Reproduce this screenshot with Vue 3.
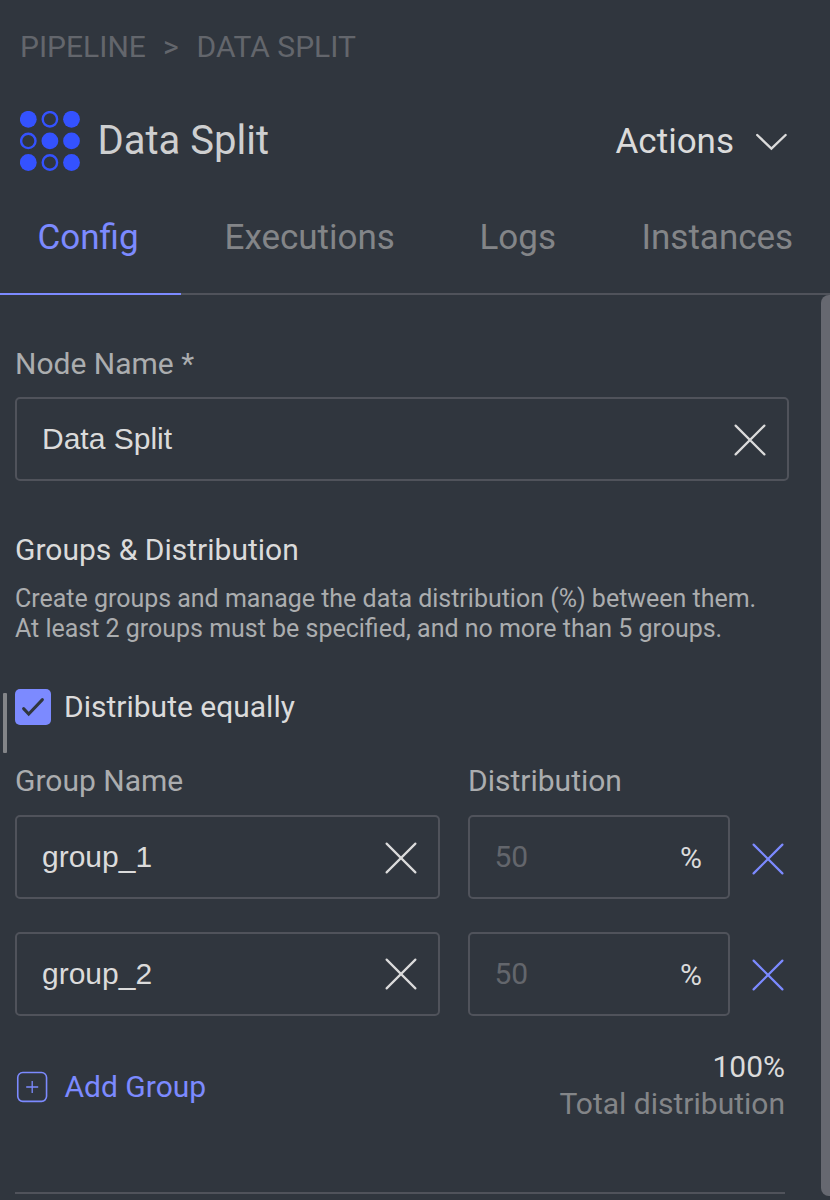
<script setup>
import { ref } from 'vue'

const tabs = ['Config', 'Executions', 'Logs', 'Instances']
const activeTab = ref('Config')
const nodeName = ref('Data Split')
const equal = ref(true)
const groups = ref([
  { name: 'group_1', share: 50 },
  { name: 'group_2', share: 50 },
])
const dots = [
  [8.3, 8.3, 1], [29.9, 8.3, 0], [51.5, 8.3, 1],
  [8.3, 29.9, 0], [29.9, 29.9, 1], [51.5, 29.9, 1],
  [8.3, 51.5, 1], [29.9, 51.5, 0], [51.5, 51.5, 1],
]
</script>

<template>
  <div class="panel">
    <nav class="crumbs">
      <span class="crumb-root">PIPELINE</span>
      <span class="crumb-sep">&gt;</span>
      <span class="crumb-leaf">DATA SPLIT</span>
    </nav>

    <header class="head">
      <svg class="logo" viewBox="0 0 60 60">
        <circle
          v-for="(d, i) in dots" :key="i" :cx="d[0]" :cy="d[1]" :r="d[2] ? 8.4 : 7.2"
          :class="d[2] ? 'dot' : 'ring'"
        />
      </svg>
      <h1 class="title">Data Split</h1>
      <button class="actions">
        <span>Actions</span>
        <svg class="chevron" viewBox="0 0 32 18"><path d="M1.2 2 L15.4 15.6 L29.6 2" /></svg>
      </button>
    </header>

    <div class="tabs">
      <button
        v-for="t in tabs" :key="t" class="tab" :class="[{ active: t === activeTab }, t.toLowerCase()]"
        @click="activeTab = t"
      ><span>{{ t }}</span></button>
    </div>

    <main class="content">
      <label class="label node-label">Node Name *</label>
      <div class="field node-field">
        <input v-model="nodeName" class="input">
        <svg class="x" viewBox="0 0 32 32"><path d="M1.6 1.6 L30.4 30.4 M30.4 1.6 L1.6 30.4" /></svg>
      </div>

      <h2 class="section">Groups &amp; Distribution</h2>
      <p class="desc">
        <span class="desc-a">Create groups and manage the data distribution (%) between them.</span><br>
        <span class="desc-b">At least 2 groups must be specified, and no more than 5 groups.</span>
      </p>

      <div class="check" @click="equal = !equal">
        <span class="box">
          <svg v-if="equal" viewBox="0 0 36 36"><path d="M8.6 19.6 L13.7 25 L27.4 10.6" /></svg>
        </span>
        <span class="check-text">Distribute equally</span>
      </div>

      <div class="grid">
        <span class="label name-label">Group Name</span>
        <span class="label dist-label">Distribution</span>
        <span></span>
        <template v-for="g in groups" :key="g.name">
          <div class="field name-field">
            <input v-model="g.name" class="input">
            <svg class="x" viewBox="0 0 32 32"><path d="M1.6 1.6 L30.4 30.4 M30.4 1.6 L1.6 30.4" /></svg>
          </div>
          <div class="field share">
            <span class="num">{{ g.share }}</span>
            <span class="pct">%</span>
          </div>
          <svg class="x remove" viewBox="0 0 32 32"><path d="M1.6 1.6 L30.4 30.4 M30.4 1.6 L1.6 30.4" /></svg>
        </template>
      </div>

      <footer class="foot">
        <button class="add">
          <svg viewBox="0 0 32 32">
            <rect x="1.75" y="1.55" width="28.8" height="28.8" rx="5" />
            <path d="M16.2 10 V22 M10.2 16 H22.2" />
          </svg>
          <span class="add-text">Add Group</span>
        </button>
        <div class="total">
          <div class="total-num">100%</div>
          <div class="total-text">Total distribution</div>
        </div>
      </footer>
      <hr class="rule">
    </main>
    <div class="scrollbar"></div>
    <div class="handle"></div>
  </div>
</template>

<style>
html, body { background: #30363e; }
</style>

<style scoped>
.panel {
  position: relative;
  box-sizing: border-box;
  width: 830px;
  height: 1200px;
  overflow: hidden;
  background: #30363e;
  font-family: Roboto, sans-serif;
  color: #dbdbdb;
  white-space: nowrap;
}
button { border: 0; padding: 0; background: none; font-family: inherit; color: inherit; }
h1, h2, p, hr { margin: 0; font-weight: 400; }

.crumbs {
  display: flex;
  padding: 27px 0 0 20px;
  font-size: 30px;
  line-height: 40px;
  color: #63666c;
}
.crumb-root { width: 143px; }
.crumb-sep { width: 33.5px; }

.head { display: flex; align-items: center; height: 60px; padding: 44px 42px 0 20px; }
.logo { width: 60px; height: 60px; margin-right: 17.5px; }
.dot { fill: #3452ff; }
.ring { fill: none; stroke: #3452ff; stroke-width: 2.4; }
.title { flex: 1; font-size: 40px; line-height: 60px; height: 60px; color: #cecfd0; }
.actions { display: flex; align-items: center; gap: 22px; font-size: 35px; line-height: 60px; padding-top: 2px; }
.chevron { width: 32px; height: 18px; }
.chevron path { fill: none; stroke: #dbdbdb; stroke-width: 2.4; stroke-linecap: round; }

.tabs {
  display: grid;
  grid-template-columns: 181px 255px 162px 232px;
  height: 84px;
  margin-top: 38px;
  border-bottom: 2px solid #50535b;
}
.tab {
  height: 86px;
  padding: 0 0 26px 43.5px;
  text-align: left;
  font-size: 35px;
  line-height: 56px;
  color: #838588;
  border-bottom: 2px solid transparent;
}
.tab.config { padding-left: 37.5px; }
.tab.active { color: #7c8aff; border-bottom-color: #7c8aff; }

.content { padding: 49px 0 0 15px; width: 774px; }
.label { font-size: 30px; line-height: 40px; color: #abadaf; }
.node-label { display: block; }
.field {
  display: flex;
  align-items: center;
  box-sizing: border-box;
  height: 84px;
  border: 2px solid #50535b;
  border-radius: 5px;
  padding: 0 21px 0 25px;
}
.node-field { margin-top: 13px; }
.input {
  flex: 1;
  min-width: 0;
  height: 60px;
  padding: 0;
  margin: 0;
  border: 0;
  outline: 0;
  background: none;
  color: #dbdbdb;
  font: 30px "Liberation Sans", Arial, sans-serif;
}
.x { width: 32px; height: 32px; flex: none; }
.field .x { margin-top: 2px; }
.x path { fill: none; stroke: #dbdbdb; stroke-width: 2.2; stroke-linecap: round; }

.section { margin-top: 49px; font-size: 30px; line-height: 40px; }
.desc { margin-top: 14px; font-size: 24.97px; line-height: 30px; color: #abadaf; }
.check { display: flex; align-items: center; gap: 13px; height: 36px; margin-top: 45px; font-size: 30px; }
.check-text { margin-top: -1px; }
.box { width: 36px; height: 36px; border-radius: 5px; background: #7c8aff; }
.box svg { display: block; }
.box path { fill: none; stroke: #30363e; stroke-width: 3; stroke-linecap: round; }

.grid {
  display: grid;
  grid-template-columns: 425px 262px 32px;
  grid-template-rows: 54px 117px 84px;
  column-gap: 28px;
  margin-top: 36px;
}
.share { font-size: 30px; justify-content: space-between; padding: 0 26px 0 24.5px; }
.num { color: #63666c; margin-bottom: 2px; }
.pct { font-size: 30px; margin-top: 1px; }
.remove { margin: 27.5px 0 0 -6px; }
.remove:last-child { margin-top: 26.5px; }
.name-field:nth-last-child(3) .x { margin-top: 0; }
.remove path { stroke: #7c8aff; }

.foot { display: flex; justify-content: space-between; padding: 32px 4px 0 0; }
.add { display: flex; align-items: center; height: 40px; gap: 16.5px; margin-top: 19px; font-size: 30px; color: #7c8aff; }
.add svg { width: 32px; height: 32px; margin-left: 1px; }
.add-text { margin-top: -1px; }
.add rect, .add path { fill: none; stroke: #7c8aff; stroke-width: 1.6; }
.add path { stroke-width: 1.3; }
.total { text-align: right; font-size: 30px; line-height: 37px; }
.total-text { color: #838588; }
.rule { width: 770px; height: 2px; margin-top: 70px; border: 0; background: #50535b; }

.scrollbar {
  position: absolute;
  left: 821px;
  top: 295px;
  width: 18px;
  height: 901px;
  border-radius: 8px;
  background: #666870;
}
.handle { position: absolute; left: 3px; top: 693px; width: 4px; height: 60px; border-radius: 1px; background: #838588; }
</style>
